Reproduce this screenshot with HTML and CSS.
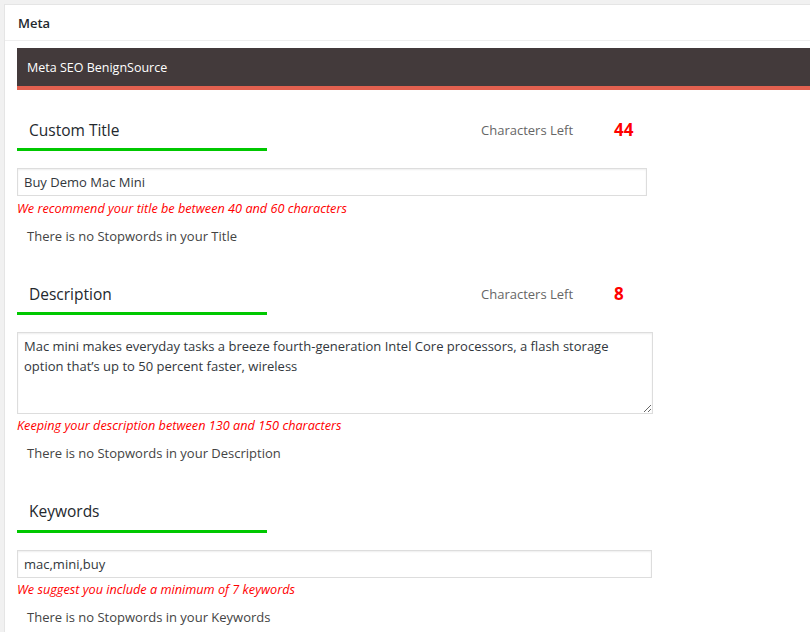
FILE: index.html
```html
<!DOCTYPE html>
<html>
<head>
<meta charset="utf-8">
<link rel="stylesheet" href="styles.css">
</head>
<body>
<div class="panel">
  <div class="panel-head">Meta</div>
  <div class="panel-body">
    <div class="seo-bar">Meta SEO BenignSource</div>

    <div class="section first">
      <div class="title-row">
        <div class="field-title">Custom Title</div>
        <div class="counter-label">Characters Left</div>
        <div class="counter-num">44</div>
      </div>
      <input class="text-input w630" type="text" value="Buy Demo Mac Mini">
      <div class="hint">We recommend your title be between 40 and 60 characters</div>
      <div class="stop">There is no Stopwords in your Title</div>
    </div>

    <div class="section">
      <div class="title-row">
        <div class="field-title">Description</div>
        <div class="counter-label">Characters Left</div>
        <div class="counter-num">8</div>
      </div>
      <textarea class="text-area">Mac mini makes everyday tasks a breeze fourth-generation Intel Core processors, a flash storage option that’s up to 50 percent faster, wireless</textarea>
      <div class="hint tight">Keeping your description between 130 and 150 characters</div>
      <div class="stop">There is no Stopwords in your Description</div>
    </div>

    <div class="section">
      <div class="title-row">
        <div class="field-title kw">Keywords</div>
      </div>
      <input class="text-input w634" type="text" value="mac,mini,buy">
      <div class="hint tight">We suggest you include a minimum of 7 keywords</div>
      <div class="stop">There is no Stopwords in your Keywords</div>
    </div>
  </div>
</div>
</body>
</html>
```

FILE: styles.css
```css
html, body {
  margin: 0;
  padding: 0;
  background: #f1f1f1;
  overflow: hidden;
}
body {
  padding: 4px 0 0 4px;
  font-family: "Open Sans", "Noto Sans", sans-serif;
  font-size: 13px;
  color: #444;
  height: 632px;
  box-sizing: border-box;
}
.panel {
  background: #fff;
  border: 1px solid #e5e5e5;
  border-right: none;
  border-bottom: none;
  height: 100%;
  box-sizing: border-box;
  overflow: hidden;
}
.panel-head {
  height: 36px;
  box-sizing: border-box;
  border-bottom: 1px solid #eee;
  padding-left: 13px;
  line-height: 36px;
  font-size: 13px;
  font-weight: 600;
  color: #23282d;
}
.panel-body {
  padding-left: 12px;
  padding-top: 7px;
}
.seo-bar {
  height: 38px;
  line-height: 39px;
  background: #433a3b;
  border-bottom: 4px solid #e2604f;
  color: #fff;
  font-size: 12.5px;
  padding-left: 10px;
}
.section {
  display: flex;
  flex-direction: column;
  align-items: flex-start;
}
.title-row {
  display: flex;
  align-items: flex-start;
  margin-top: 37px;
}
.section.first .title-row {
  margin-top: 29px;
}
.field-title {
  width: 250px;
  box-sizing: border-box;
  padding-left: 12px;
  padding-bottom: 7px;
  line-height: 22px;
  font-size: 15.5px;
  color: #23282d;
  border-bottom: 3px solid #00c800;
}
.field-title.kw {
  padding-bottom: 8px;
}
.counter-label {
  margin-left: 214px;
  width: 133px;
  line-height: 22px;
  font-size: 13px;
  color: #666;
}
.counter-num {
  line-height: 22px;
  font-size: 17px;
  font-weight: 700;
  color: #ff0000;
}
.text-input {
  display: block;
  margin: 17px 0 0 0;
  height: 28px;
  box-sizing: border-box;
  border: 1px solid #ddd;
  box-shadow: inset 0 1px 2px rgba(0,0,0,0.07);
  padding: 0 6px;
  font-family: "Open Sans", "Noto Sans", sans-serif;
  font-size: 13px;
  color: #32373c;
  background: #fff;
  outline: none;
}
.w630 { width: 630px; }
.w634 { width: 635px; }
.text-area {
  display: block;
  margin: 17px 0 0 0;
  width: 636px;
  height: 82px;
  box-sizing: border-box;
  border: 1px solid #ddd;
  box-shadow: inset 0 1px 2px rgba(0,0,0,0.07);
  padding: 3px 6px;
  font-family: "Open Sans", "Noto Sans", sans-serif;
  font-size: 13px;
  line-height: 20px;
  color: #32373c;
  resize: vertical;
  overflow: hidden;
}
.hint {
  margin-top: 4px;
  line-height: 16px;
  font-size: 12.7px;
  font-style: italic;
  color: #ff0000;
}
.hint.tight {
  margin-top: 3px;
}
.stop {
  margin-top: 10px;
  padding-left: 10px;
  line-height: 20px;
  font-size: 13px;
  color: #444;
}
```
